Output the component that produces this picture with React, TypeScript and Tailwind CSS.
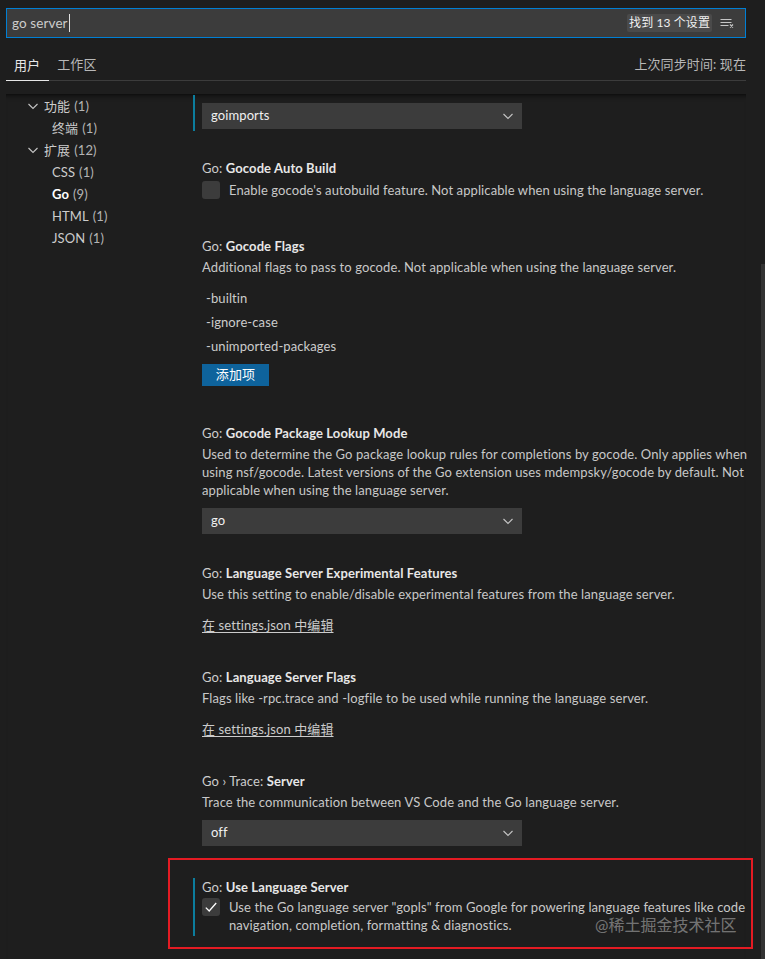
import type { ReactNode } from 'react';

// Settings editor, filtered on "go server", scrolled into the Go section.

function ChevronDown({ className = '' }: { className?: string }) {
  return (
    <svg viewBox="0 0 16 16" className={className} fill="none" stroke="currentColor" strokeWidth={1.1}>
      <path d="M3.5 6l4.5 4.5L12.5 6" />
    </svg>
  );
}

function CheckMark() {
  return (
    <svg viewBox="0 0 16 16" className="h-[16px] w-[16px]" fill="none" stroke="#ffffff" strokeWidth={1.3}>
      <path d="M2.8 8.6l3.4 3.4 7-8" />
    </svg>
  );
}

function ClearFilter() {
  return (
    <svg viewBox="0 0 16 16" className="h-[16px] w-[16px]" fill="none" stroke="#c5c5c5" strokeWidth={1}>
      <path d="M1.5 4.5h11M1.5 7.5h11M1.5 10.5h8" />
      <path d="M11 9.5l3 3M14 9.5l-3 3" strokeWidth={1.2} />
    </svg>
  );
}

function Title({ prefix, name }: { prefix: string; name: string }) {
  return (
    <div className="h-[18px] whitespace-nowrap leading-[18px] text-[#cccccc]">
      {prefix}
      <span className="font-bold text-[#e7e7e7]">{name}</span>
    </div>
  );
}

function Desc({ children, className = '' }: { children: ReactNode; className?: string }) {
  return <div className={`whitespace-nowrap leading-[18px] text-[#c8c8c8] ${className}`}>{children}</div>;
}

function Select({ value, className = '' }: { value: string; className?: string }) {
  return (
    <div className={`flex h-[26px] w-[320px] items-center justify-between bg-[#3c3c3c] pl-[9px] pr-[6px] text-[#f0f0f0] ${className}`}>
      <span>{value}</span>
      <ChevronDown className="h-[16px] w-[16px] text-[#c5c5c5]" />
    </div>
  );
}

function EditLink({ className = '' }: { className?: string }) {
  return (
    <div className={`h-[18px] leading-[18px] ${className}`}>
      <span className="text-[#cccccc] underline underline-offset-[2px]">在 settings.json 中编辑</span>
    </div>
  );
}

function Item({ modified = false, className = '', children }: { modified?: boolean; className?: string; children: ReactNode }) {
  return (
    <div className={`border-l-2 pl-[7px] ${modified ? 'border-[#0c7d9d]' : 'border-transparent'} ${className}`}>
      {children}
    </div>
  );
}

const toc: { label: string; count: number; level: 0 | 1; bold?: boolean }[] = [
  { label: '功能', count: 1, level: 0 },
  { label: '终端', count: 1, level: 1 },
  { label: '扩展', count: 12, level: 0 },
  { label: 'CSS', count: 1, level: 1 },
  { label: 'Go', count: 9, level: 1, bold: true },
  { label: 'HTML', count: 1, level: 1 },
  { label: 'JSON', count: 1, level: 1 },
];

export default function App() {
  return (
    <div className="relative h-[959px] w-[765px] overflow-hidden bg-[#1e1e1e] font-['Lato','Noto_Sans_CJK_SC',sans-serif] text-[13px] tracking-[0.1px] text-[#cccccc]">
      <div className="pl-[6px] pr-[19px] pt-[8px]">
        {/* search */}
        <div className="flex h-[30px] items-center border border-[#007fd4] bg-[#3c3c3c] pl-[5px] pr-[10px]">
          <span className="text-[13.5px] text-[#cccccc]">go server</span>
          <span className="ml-px h-[18px] w-px bg-[#e0e0e0]" />
          <span className="ml-auto rounded-[2px] bg-[#4a4a4a] px-[2px] text-[12px] leading-[18px] text-[#f0f0f0]">
            找到 13 个设置
          </span>
          <span className="ml-[7px]">
            <ClearFilter />
          </span>
        </div>

        {/* tabs */}
        <div className="flex h-[43px] items-end border-b border-[#3c3c3c]">
          <div className="-mb-px border-b border-[#e7e7e7] pb-[6px] pl-[8px] pr-[9px] leading-[18px] text-[#e7e7e7]">用户</div>
          <div className="pb-[7px] pl-[8px] leading-[18px] text-[#b8b8b8]">工作区</div>
          <div className="ml-auto pb-[7px] leading-[18px] text-[#b8b8b8]">上次同步时间: 现在</div>
        </div>
      </div>

      {/* body */}
      <div className="mx-[6px] mr-[19px] mt-[13px] flex h-[865px] shadow-[inset_0_6px_6px_-6px_#000]">
        <div className="w-[187px] shrink-0 pt-px">
          {toc.map((row) => (
            <div key={row.label} className={`flex h-[22px] items-center leading-[22px] ${row.level === 0 ? 'pl-[19px]' : 'pl-[46px]'}`}>
              {row.level === 0 && <ChevronDown className="mr-[3px] h-[16px] w-[16px] text-[#c5c5c5]" />}
              <span className={row.bold ? 'font-bold text-[#ffffff]' : 'text-[#cccccc]'}>{row.label}</span>
              <span className="ml-[4px] text-[#b4b4b4]">({row.count})</span>
            </div>
          ))}
        </div>

        <div className="min-w-0 flex-1">
          <Item modified className="mt-px pb-[2px] pt-[8px]">
            <Select value="goimports" />
          </Item>

          <Item className="mt-[28px]">
            <Title prefix="Go: " name="Gocode Auto Build" />
            <div className="mt-[4px] flex items-center">
              <div className="h-[18px] w-[18px] rounded-[3px] bg-[#3c3c3c]" />
              <Desc className="ml-[9px]">Enable gocode's autobuild feature. Not applicable when using the language server.</Desc>
            </div>
          </Item>

          <Item className="mt-[38px]">
            <Title prefix="Go: " name="Gocode Flags" />
            <Desc className="mt-[3px]">Additional flags to pass to gocode. Not applicable when using the language server.</Desc>
            <div className="mt-[10px]">
              {['-builtin', '-ignore-case', '-unimported-packages'].map((flag) => (
                <div key={flag} className="h-[24px] pl-[4px] leading-[24px] text-[#cccccc]">
                  {flag}
                </div>
              ))}
            </div>
            <div className="mt-[6px] flex h-[22px] w-[67px] items-center justify-center bg-[#0e639c] text-[#ffffff]">添加项</div>
          </Item>

          <Item className="mt-[38px]">
            <Title prefix="Go: " name="Gocode Package Lookup Mode" />
            <Desc className="mt-[3px]">
              Used to determine the Go package lookup rules for completions by gocode. Only applies when
              <br />
              using nsf/gocode. Latest versions of the Go extension uses mdempsky/gocode by default. Not
              <br />
              applicable when using the language server.
            </Desc>
            <Select value="go" className="mt-[9px]" />
          </Item>

          <Item className="mt-[30px]">
            <Title prefix="Go: " name="Language Server Experimental Features" />
            <Desc className="mt-[3px]">Use this setting to enable/disable experimental features from the language server.</Desc>
            <EditLink className="mt-[13px]" />
          </Item>

          <Item className="mt-[34px]">
            <Title prefix="Go: " name="Language Server Flags" />
            <Desc className="mt-[3px]">Flags like -rpc.trace and -logfile to be used while running the language server.</Desc>
            <EditLink className="mt-[13px]" />
          </Item>

          <Item className="mt-[34px]">
            <Title prefix="Go › Trace: " name="Server" />
            <Desc className="mt-[3px]">Trace the communication between VS Code and the Go language server.</Desc>
            <Select value="off" className="mt-[9px]" />
          </Item>

          <Item modified className="mt-[32px] pb-[2px]">
            <Title prefix="Go: " name="Use Language Server" />
            <div className="mt-[2px] flex items-start">
              <div className="flex h-[18px] w-[18px] shrink-0 items-center justify-center rounded-[3px] bg-[#3c3c3c]">
                <CheckMark />
              </div>
              <Desc className="ml-[9px]">
                Use the Go language server "gopls" from Google for powering language features like code
                <br />
                navigation, completion, formatting &amp; diagnostics.
              </Desc>
            </div>
          </Item>
        </div>
      </div>

      {/* scrollbar slider */}
      <div className="absolute bottom-0 right-0 top-[264px] w-[4px] bg-[#333333]" />

      {/* annotation + watermark */}
      <div className="pointer-events-none absolute left-[168px] top-[858px] h-[91px] w-[585px] border-2 border-[#e41b23]" />
      <div className="pointer-events-none absolute left-[595px] top-[917px] text-[16px] leading-[16px] tracking-normal text-white/40">@稀土掘金技术社区</div>
    </div>
  );
}
